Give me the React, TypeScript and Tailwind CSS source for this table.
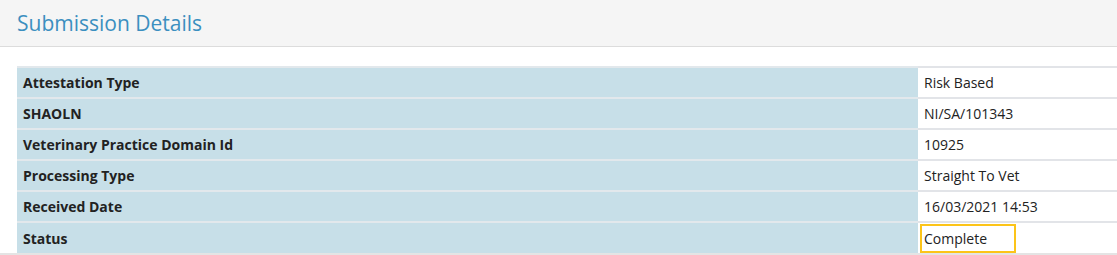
const rows: [string, string][] = [
  ["Attestation Type", "Risk Based"],
  ["SHAOLN", "NI/SA/101343"],
  ["Veterinary Practice Domain Id", "10925"],
  ["Processing Type", "Straight To Vet"],
  ["Received Date", "16/03/2021 14:53"],
  ["Status", "Complete"],
];

export default function App() {
  return (
    <div className="w-[1117px] h-[255px] overflow-hidden bg-white text-[#222] font-['Open_Sans',sans-serif]">
      <div className="h-[47px] bg-[#f5f5f5] border-b border-[#dcdcdc] px-[17px] flex items-center">
        <h2 className="text-[21px] text-[#3b8fc0] leading-none">Submission Details</h2>
      </div>
      <div className="pt-[19px] pl-[17px] border-b-[3px] border-[#e4e4e4]">
        <table className="w-full border-collapse text-[14px]">
          <tbody>
            {rows.map(([label, value], i) => (
              <tr key={label} className="h-[31px]">
                <td className="w-[901px] bg-[#c7dfe8] border-t-2 border-[#e2e8ec] px-[6px] font-bold">
                  {label}
                </td>
                <td className="border-t-2 border-[#e2e4e8] px-[6px] relative">
                  {i === rows.length - 1 ? (
                    <span className="absolute left-[2px] top-[1px] h-[29px] w-[96px] border-2 border-[#fcc419] pl-[2px] flex items-center">
                      {value}
                    </span>
                  ) : (
                    value
                  )}
                </td>
              </tr>
            ))}
          </tbody>
        </table>
      </div>
    </div>
  );
}
